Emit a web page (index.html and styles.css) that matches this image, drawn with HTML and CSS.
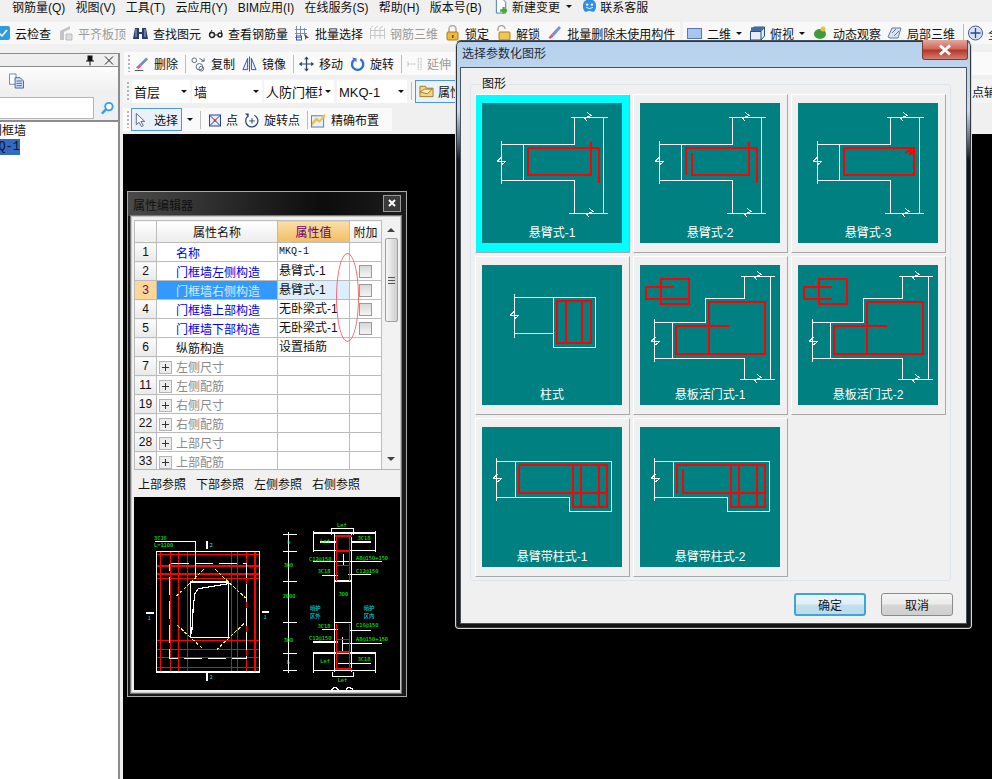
FILE: index.html
```html
<!DOCTYPE html>
<html>
<head>
  <meta charset="utf-8">
  <title>钢筋算量</title>
  <link rel="stylesheet" href="styles.css">
</head>
<body>
  <svg class="defs" width="0" height="0">
    <defs>
      <path id="brk-v" d="M-4.5 .5H4.5M.5 -4L-4 .5M4.5 .5L.5 4"/>
      <path id="brk-h" d="M.5 -4.5L4 -1.5L-2.5 1L.5 4.5"/>
      <g id="wall-a" class="wire">
        <path d="M19.5 38V81M19.5 41.5H92.5V14.5M88.5 14.5H125.5M121.5 14.5V110.5M86.5 110.5H125.5M92.5 110.5V77.5H19.5M41.5 41.5V77.5"/>
        <use href="#brk-v" x="19" y="58"/>
        <use href="#brk-h" x="105" y="14"/>
        <use href="#brk-h" x="107" y="110"/>
      </g>
      <g id="wall-b" class="wire">
        <path d="M14.5 54V97M14.5 57.5H65.5V33.5H104.5V11.5M101 11.5H135M130.5 11.5V114.5M100 114.5H135M104.5 114.5V93.5H14.5M32.5 57.5V93.5"/>
        <use href="#brk-v" x="15" y="76"/>
        <use href="#brk-h" x="117" y="11"/>
        <use href="#brk-h" x="117" y="114"/>
      </g>
      <g id="wall-c" class="wire">
        <path d="M14.5 31V74M14.5 34.5H129.5V84.5H87.5V70.5H14.5M33.5 34.5V70.5"/>
        <use href="#brk-v" x="15" y="51"/>
      </g>
    </defs>
  </svg>

  <div class="app">
    <div class="menubar">
      <span>钢筋量(Q)</span><span>视图(V)</span><span>工具(T)</span><span>云应用(Y)</span><span>BIM应用(I)</span><span>在线服务(S)</span><span>帮助(H)</span><span>版本号(B)</span>
      <span class="tool tool-new">
        <svg class="ico" viewBox="0 0 16 16"><path d="M2.5 .5H9L12.5 4V15.5H2.5Z" fill="#fff" stroke="#3f74b5"/><path d="M9 9H11.5V11.5H14V14H11.5V16H9V14H6.500V11.500H9Z" fill="#4fa32e"/></svg>
        新建变更<i class="caret"></i>
      </span>
      <span class="tool">
        <svg class="ico" viewBox="0 0 16 16"><path d="M8 1C13 1 15 4 15 8C15 12 13 15 11.500 14L8 13L4.500 14C3 15 1 12 1 8C1 4 3 1 8 1Z" fill="#2f8fe0"/><circle cx="5.500" cy="6.500" r="1.300" fill="#fff"/><circle cx="10.500" cy="6.500" r="1.300" fill="#fff"/><path d="M4.500 9.500Q8 12 11.500 9.500" fill="none" stroke="#fff"/></svg>
        联系客服
      </span>
    </div>

    <div class="top-tools">
      <div class="band band-main">
        <span class="tool">
          <svg class="ico" viewBox="0 0 15 16"><rect x="0" y="1" width="15" height="14" rx="2" fill="#2f9be0"/><path d="M4 8L7 11L12 5" fill="none" stroke="#fff" stroke-width="1.500"/></svg>
          云检查
        </span>
        <span class="tool off">
          <svg class="ico" viewBox="0 0 15 16"><path d="M2 15V6L12 1V4L6 7V15Z" fill="#c4c4c4"/><path d="M8 9H14V15H8Z" fill="#dcdcdc" stroke="#bbb"/></svg>
          平齐板顶
        </span>
        <span class="tool">
          <svg class="ico" viewBox="0 0 15 16"><path d="M2 3H6V7H9V3H13L15 14H9V9H6V14H0Z" fill="#2c3a66"/><path d="M3 4V12M12 4V12" stroke="#9fb4d8"/></svg>
          查找图元
        </span>
        <span class="tool">
          <svg class="ico" viewBox="0 0 15 16"><circle cx="4" cy="10" r="2.500" fill="none" stroke="#222" stroke-width="1.400"/><circle cx="12" cy="10" r="2" fill="none" stroke="#222" stroke-width="1.400"/><path d="M6.500 10H10M1.500 9L4 5M14 9L13 5" stroke="#222" fill="none"/></svg>
          查看钢筋量
        </span>
        <span class="tool">
          <svg class="ico" viewBox="0 0 15 16"><path d="M1.500 1V15M5.500 1V11M9.500 3V11M0 4.500H12M0 8.500H12M0 12.500H7" stroke="#7f8ea6" fill="none"/><rect x="1.500" y="11" width="5" height="4" fill="none" stroke="#2f55b0"/><path d="M10 9L14 13H11.500L10 15Z" fill="#555"/></svg>
          批量选择
        </span>
        <span class="tool off">
          <svg class="ico" viewBox="0 0 15 16"><path d="M.5 3V14M5 3V14M10 3V14M14.500 3V14M0 5.500H15M0 10.500H15M3 1L.5 3M8 1L5 3M13 1L10 3" stroke="#c8c8c8" fill="none"/></svg>
          钢筋三维
        </span>
        <span class="tool">
          <svg class="ico" viewBox="0 0 15 16"><path d="M4 7V4A3.500 3.500 0 0 1 11 4V7" fill="none" stroke="#a9a9a9" stroke-width="1.500"/><rect x="2" y="7" width="11" height="8" rx="1" fill="#efb93a" stroke="#b07d12"/><rect x="7" y="10" width="1.500" height="3" fill="#6b4a06"/></svg>
          锁定
        </span>
        <span class="tool">
          <svg class="ico" viewBox="0 0 15 16"><path d="M2 6V4A3.500 3.500 0 0 1 9 4" fill="none" stroke="#a9a9a9" stroke-width="1.500"/><rect x="3" y="7" width="11" height="8" rx="1" fill="#f0c653" stroke="#b07d12"/></svg>
          解锁
        </span>
        <span class="tool">
          <svg class="ico" viewBox="0 0 15 16"><path d="M12 1L14 3L7 11L4.500 9Z" fill="#7b93c9"/><path d="M4.500 9L7 11L3 14L1.500 12.500Z" fill="#d9559a"/></svg>
          批量删除未使用构件
        </span>
      </div>
      <div class="band band-view">
        <span class="tool">
          <svg class="ico" viewBox="0 0 15 16"><rect x=".5" y="3.500" width="14" height="10" fill="#a9c6ee" stroke="#5378b5"/></svg>
          二维<i class="caret"></i>
        </span>
        <span class="tool">
          <svg class="ico" viewBox="0 0 15 16"><path d="M.5 6.500L4 2H14.500V11L11 15H.5Z" fill="#e6eef9" stroke="#2b4f86"/><path d="M.5 6.500H11V15M11 6.500L14.500 2" fill="none" stroke="#2b4f86"/><path d="M1 2.500L4 2H14L11 6H1Z" fill="#3f6ea8"/></svg>
          俯视<i class="caret"></i>
        </span>
        <span class="tool tool-orbit">
          <svg class="ico" viewBox="0 0 15 16"><ellipse cx="7" cy="9" rx="6" ry="5" fill="#3f9a3a"/><circle cx="10" cy="4" r="2.500" fill="#e2c63a"/></svg>
          动态观察
        </span>
        <span class="tool">
          <svg class="ico" viewBox="0 0 15 16"><path d="M1 12L5 3H14L11 13H3Z" fill="#dbe4f2" stroke="#5f7aa6"/><path d="M5 8L9 4M7 11L12 6" stroke="#5f7aa6"/></svg>
          局部三维
        </span>
        <i class="sep sep-end"></i>
        <span class="tool">
          <svg class="ico" viewBox="0 0 15 16"><circle cx="7.500" cy="8" r="7" fill="#d7e3f5" stroke="#3e5c94"/><path d="M7.500 3V13M2.500 8H12.500" stroke="#24498d" stroke-width="1.300"/></svg>
          全
        </span>
      </div>
    </div>

    <div class="workspace">
      <aside class="side">
        <div class="side-head">
          <svg class="pin" viewBox="0 0 10 11"><path d="M2.500 .5H7.500V5.500H9V6.500H5.500V10.500H4.500V6.500H1V5.500H2.500Z" fill="#111"/></svg>
          <svg class="pin" viewBox="0 0 10 11"><path d="M1 1.500L9 9.500M9 1.500L1 9.500" stroke="#222"/></svg>
        </div>
        <div class="side-tools">
          <svg class="ico" viewBox="0 0 16 16"><path d="M.5 .5H7.500V11.500H.5Z" fill="#fff" stroke="#6c7fa6"/><path d="M6.500 4.500H12L15.500 8V15.500H6.500Z" fill="#d5e3fa" stroke="#3d5fa8"/><path d="M8 8H14M8 10.500H14M8 13H14" stroke="#3d5fa8"/></svg>
        </div>
        <div class="side-search">
          <div class="search-input"></div>
          <svg class="ico" viewBox="0 0 16 16"><rect width="16" height="16" fill="#e8f1fa"/><circle cx="9.500" cy="6.500" r="4" fill="#fff" stroke="#3d9be0" stroke-width="2"/><path d="M6.500 9.500L2 14" stroke="#3d9be0" stroke-width="2.500"/></svg>
        </div>
        <div class="tree">
          <div class="tree-row">门框墙</div>
          <div class="tree-row tree-hit"><span>MKQ-1</span></div>
        </div>
      </aside>

      <main class="stage">
        <div class="strip strip-edit">
          <span class="tool">
            <svg class="ico" viewBox="0 0 16 16"><path d="M13 1L15 3L8 10L6 8Z" fill="#6d8bc7"/><path d="M6 8L8 10L5 13L2 12Z" fill="#d9559a"/><path d="M1 15H10" stroke="#444"/></svg>
            删除
          </span>
          <i class="sep"></i>
          <span class="tool">
            <svg class="ico" viewBox="0 0 16 16"><circle cx="3.500" cy="4" r="2.500" fill="none" stroke="#5a6678"/><circle cx="9" cy="11" r="3.500" fill="none" stroke="#5a6678"/><circle cx="11" cy="13" r="2.500" fill="none" stroke="#5a6678"/><path d="M9 2L14 5M14 2V5H11" fill="none" stroke="#5a6678"/></svg>
            复制
          </span>
          <span class="tool">
            <svg class="ico" viewBox="0 0 16 16"><path d="M6 2V14H1ZM10 2V14H15Z" fill="#e6edf8" stroke="#2c549b"/><path d="M8 0V16" stroke="#2c549b"/></svg>
            镜像
          </span>
          <i class="sep"></i>
          <span class="tool">
            <svg class="ico" viewBox="0 0 16 16"><path d="M8 1V15M1 8H15" stroke="#27456f" stroke-width="1.300"/><path d="M8 0L10.500 3H5.500ZM8 16L5.500 13H10.500ZM0 8L3 5.500V10.500ZM16 8L13 10.500V5.500Z" fill="#27456f"/></svg>
            移动
          </span>
          <span class="tool">
            <svg class="ico" viewBox="0 0 16 16"><path d="M4.500 3.500A6 6 0 1 0 11 3" fill="none" stroke="#2f6fc4" stroke-width="2.500"/><path d="M2 1L7 2V6Z" fill="#2f6fc4"/></svg>
            旋转
          </span>
          <i class="sep"></i>
          <span class="tool off">
            <svg class="ico" viewBox="0 0 16 16"><path d="M1 8H9M1 5.500V10.500M12 1.500V14.500M15 1.500V14.500" stroke="#b5b5b5" stroke-dasharray="2 1" fill="none"/></svg>
            延伸
          </span>
        </div>

        <div class="strip strip-combo">
          <div class="combo combo-a">首层<i class="caret"></i></div>
          <div class="combo combo-b">墙<i class="caret"></i></div>
          <div class="combo combo-c"><span class="combo-text">人防门框墙</span><i class="caret"></i></div>
          <div class="combo combo-d">MKQ-1<i class="caret"></i></div>
          <i class="sep"></i>
          <span class="tool tool-on tool-attr">
            <svg class="ico" viewBox="0 0 16 16"><path d="M1 3H7L8 5H15V14H1Z" fill="#f4d77e" stroke="#9d7a2a"/><path d="M1 9L6 6H14L9 11Z" fill="#fff0b8" stroke="#9d7a2a"/></svg>
            属性
          </span>
          <span class="cut-right">点辅助</span>
        </div>

        <div class="strip strip-draw">
          <span class="tool tool-on tool-select">
            <svg class="ico" viewBox="0 0 16 16"><path d="M3.500 1V13L6.500 10.500L9 15L11 14L8.500 9.500H12.500Z" fill="#f8f8f8" stroke="#4f6488"/></svg>
            选择
          </span>
          <i class="caret"></i>
          <i class="sep"></i>
          <span class="tool tool-dot">
            <svg class="ico" viewBox="0 0 12 16"><rect x=".5" y="3" width="11" height="11" fill="#e6ecf8" stroke="#27428a"/><path d="M1 3.500L11 13.500M11 3.500L1 13.500" stroke="#27428a"/><circle cx="6" cy="8.500" r="1.300" fill="#d33"/></svg>
            点
          </span>
          <span class="tool">
            <svg class="ico" viewBox="0 0 16 16"><path d="M4 4A6.500 6.500 0 1 0 11 3" fill="none" stroke="#27456f" stroke-width="1.300"/><path d="M1 1H5V5Z" fill="#27456f"/><path d="M8.500 6V12M5.500 9H11.500" stroke="#27456f"/></svg>
            旋转点
          </span>
          <i class="sep sep-tight"></i>
          <span class="tool">
            <svg class="ico" viewBox="0 0 16 16"><rect x=".5" y="3.500" width="13" height="12" fill="#eaf0fa" stroke="#5578b3"/><path d="M1 10L6 5L9 8L15 1V5L9 11L6 9L1 14Z" fill="#e8c254"/></svg>
            精确布置
          </span>
        </div>

        <div class="canvas"></div>
      </main>
    </div>
  </div>

  <section class="prop-window">
    <header class="prop-title">
      <span>属性编辑器</span>
      <button class="prop-close"><svg viewBox="0 0 8 8" width="8" height="8"><path d="M1 1L7 7M7 1L1 7" stroke="#fff" stroke-width="2"/></svg></button>
    </header>
    <div class="prop-body">
      <div class="prop-grid">
        <table class="prop-table">
          <colgroup><col class="c-no"><col class="c-name"><col class="c-val"><col class="c-add"></colgroup>
          <thead>
            <tr><th></th><th>属性名称</th><th class="th-val">属性值</th><th>附加</th></tr>
          </thead>
          <tbody>
            <tr><th>1</th><td class="link">名称</td><td class="mono">MKQ-1</td><td></td></tr>
            <tr><th>2</th><td class="link">门框墙左侧构造</td><td>悬臂式-1</td><td><i class="check"></i></td></tr>
            <tr class="current"><th>3</th><td class="link">门框墙右侧构造</td><td>悬臂式-1</td><td><i class="check"></i></td></tr>
            <tr><th>4</th><td class="link">门框墙上部构造</td><td>无卧梁式-1</td><td><i class="check"></i></td></tr>
            <tr><th>5</th><td class="link">门框墙下部构造</td><td>无卧梁式-1</td><td><i class="check"></i></td></tr>
            <tr><th>6</th><td class="plain">纵筋构造</td><td>设置插筋</td><td></td></tr>
            <tr><th>7</th><td class="group"><i class="plus"></i>左侧尺寸</td><td></td><td></td></tr>
            <tr><th>11</th><td class="group"><i class="plus"></i>左侧配筋</td><td></td><td></td></tr>
            <tr><th>19</th><td class="group"><i class="plus"></i>右侧尺寸</td><td></td><td></td></tr>
            <tr><th>22</th><td class="group"><i class="plus"></i>右侧配筋</td><td></td><td></td></tr>
            <tr><th>28</th><td class="group"><i class="plus"></i>上部尺寸</td><td></td><td></td></tr>
            <tr><th>33</th><td class="group"><i class="plus"></i>上部配筋</td><td></td><td></td></tr>
          </tbody>
        </table>
        <div class="vscroll">
          <i class="arrow-up"></i>
          <div class="thumb"><i></i></div>
          <i class="arrow-down"></i>
        </div>
      </div>
      <div class="ref-tabs"><span>上部参照</span><span>下部参照</span><span>左侧参照</span><span>右侧参照</span></div>
      <svg class="ref-drawing" viewBox="27 20 798 579" width="266" height="193">
        <g class="d-red">
          <path d="M94 193H404M94 227H404M94 251H404M94 265H404M94 451H404M94 478H404M94 502H404M94 532H404"/>
          <path d="M106 184V545M136 184V545M160 184V545M187 184V545M320 184V545M338 184V545M365 184V545M390 184V545"/>
        </g>
        <g class="d-white">
          <rect x="94" y="184" width="310" height="361"/>
          <path class="dash" d="M137 220H365V505H134V220"/>
          <path d="M196 275H310V442H196ZM310 280L220 295L210 310L205 345L200 432"/>
          <path d="M90 154H212V265"/>
          <path class="thick" d="M246 153V177M246 549V573M63 368H87M411 365H432"/>
        </g>
        <path class="d-yellow" d="M236 237L154 318M270 237L362 323M157 405L232 474M357 400L276 477"/>
        <g class="d-white">
          <path d="M490 125V548M473 133H515M473 184H515M473 273H515M473 397H515M473 490H515M473 541H515"/>
          <path d="M620 135V115H686V135M565 122V186M752 122V186M565 128H752M565 181H752M629 128V545M680 128V545M629 272H680M629 397H680"/>
          <path d="M585 155H632M680 155H738M565 214H655M655 214H770M590 255H640M670 253H738M590 418H640M672 421H738M565 455H640M655 460H770M640 520H738"/>
          <path d="M565 486V547M752 486V547M565 488H752M565 541H752M622 545V558H686V545M655 190V225M652 440V490"/>
          <path d="M620 602A10 10 0 0 1 640 602M663 602A10 10 0 0 1 683 602"/>
        </g>
        <g class="d-red">
          <path d="M634 138V272M674 138V272M634 225H674M634 182H674M634 402V537M674 402V537M634 447H674M634 485H674"/>
          <path class="thick" d="M630 138H680M630 536H680"/>
        </g>
        <g class="d-green">
          <text x="87" y="150">3C16</text><text x="87" y="171">L=1100</text>
          <text x="487" y="162">b</text><text x="476" y="231">300</text><text x="473" y="323">2000</text><text x="476" y="456">300</text><text x="485" y="522">b</text>
          <text x="636" y="110">Lef</text><text x="586" y="158">Lef</text><text x="698" y="149">3C18</text>
          <text x="552" y="213">C12@150</text><text x="693" y="209">A8@150+150</text>
          <text x="578" y="248">3C18</text><text x="693" y="248">C12@150</text><text x="641" y="317">300</text>
          <text x="578" y="413">3C18</text><text x="693" y="410">C16@150</text>
          <text x="552" y="449">C12@150</text><text x="693" y="452">A8@150+150</text>
          <text x="586" y="518">Lef</text><text x="698" y="513">3C18</text><text x="638" y="575">Lef</text>
        </g>
        <g class="d-cyan">
          <text x="555" y="358">暗护</text><text x="555" y="383">区外</text>
          <text x="716" y="358">暗护</text><text x="716" y="383">区内</text>
          <text x="68" y="389">1</text><text x="416" y="386">1</text><text x="254" y="170">2</text><text x="254" y="566">2</text>
        </g>
      </svg>
    </div>
    <i class="red-ring"></i>
  </section>

  <section class="dialog">
    <header class="dialog-title">
      <span>选择参数化图形</span>
      <button class="dialog-close"><svg viewBox="0 0 14 12" width="14" height="12"><path d="M2 1.500L12 10.500M12 1.500L2 10.500" stroke="#fff" stroke-width="3"/></svg></button>
    </header>
    <div class="dialog-body">
      <fieldset class="shapes">
        <legend>图形</legend>
        <div class="shape-grid">
          <figure class="shape shape-picked">
            <div class="thumb-box">
              <svg viewBox="0 0 140 122"><use href="#wall-a"/><path class="rebar" d="M46 45H116.500V80M109 39V72H46V45"/></svg>
              <figcaption>悬臂式-1</figcaption>
            </div>
          </figure>
          <figure class="shape">
            <div class="thumb-box">
              <svg viewBox="0 0 140 122"><use href="#wall-a"/><path class="rebar" d="M46 72V45H116.500V80M109 39V72H52V50"/></svg>
              <figcaption>悬臂式-2</figcaption>
            </div>
          </figure>
          <figure class="shape">
            <div class="thumb-box">
              <svg viewBox="0 0 140 122"><use href="#wall-a"/><path class="rebar" d="M46 45H116V72H46ZM107 50L114 46M111 52L115 48"/></svg>
              <figcaption>悬臂式-3</figcaption>
            </div>
          </figure>
          <figure class="shape">
            <div class="thumb-box">
              <svg viewBox="0 0 140 122">
                <g class="wire"><path d="M32.500 29V73M32.500 32.500H71.500M32.500 68.500H71.500M71.500 32.500H113.500V82.500H71.500Z"/><use href="#brk-v" x="32" y="50"/></g>
                <path class="rebar" d="M75 36H109V78H75ZM84 36V78M100 36V78"/>
              </svg>
              <figcaption>柱式</figcaption>
            </div>
          </figure>
          <figure class="shape">
            <div class="thumb-box">
              <svg viewBox="0 0 140 122"><use href="#wall-b"/>
                <path class="rebar" d="M21 14H49V39H21ZM33 22H6V34H48M69 89V37H125V89H36V61H89"/>
              </svg>
              <figcaption>悬板活门式-1</figcaption>
            </div>
          </figure>
          <figure class="shape">
            <div class="thumb-box">
              <svg viewBox="0 0 140 122"><use href="#wall-b"/>
                <path class="rebar" d="M21 14H49V39H21ZM34 22H6V34H34M69 89V37H125V89H36V61H89"/>
              </svg>
              <figcaption>悬板活门式-2</figcaption>
            </div>
          </figure>
          <figure class="shape">
            <div class="thumb-box">
              <svg viewBox="0 0 140 122"><use href="#wall-c"/>
                <path class="rebar" d="M37 38H125V80H91V38M37 38V66H125M99 38V80M117 38V80"/>
              </svg>
              <figcaption>悬臂带柱式-1</figcaption>
            </div>
          </figure>
          <figure class="shape">
            <div class="thumb-box">
              <svg viewBox="0 0 140 122"><use href="#wall-c"/>
                <path class="rebar" d="M37 66V38H125V80H91V38M43 42V66H125M99 38V80M117 38V80"/>
              </svg>
              <figcaption>悬臂带柱式-2</figcaption>
            </div>
          </figure>
        </div>
      </fieldset>
      <div class="dialog-foot">
        <button class="btn btn-default">确定</button>
        <button class="btn">取消</button>
      </div>
    </div>
  </section>
</body>
</html>
```

FILE: styles.css
```css
body {
  margin: 0;
  width: 992px;
  height: 779px;
  overflow: hidden;
  position: relative;
  background-color: #f0f0f0;
  color: #111;
  font-family: "Liberation Sans", "Noto Sans CJK SC", sans-serif;
  font-size: 12px;
}

.defs {
  position: absolute;
}

.app {
  height: 779px;
  display: flex;
  flex-direction: column;
}

.ico {
  width: 15px;
  height: 16px;
  flex: none;
}

.tool {
  display: inline-flex;
  align-items: center;
  gap: 5px;
  white-space: nowrap;
  flex: none;
}

.off {
  color: #9a9a9a;
}

.caret {
  display: inline-block;
  width: 0;
  height: 0;
  border-left: 3px solid transparent;
  border-right: 3px solid transparent;
  border-top: 3px solid #111;
  flex: none;
}

.sep {
  width: 1px;
  height: 18px;
  background-color: #bdbdbd;
  flex: none;
}

/* menu */
.menubar {
  height: 12px;
  padding-left: 12px;
  display: flex;
  align-items: center;
  gap: 10.25px;
  white-space: nowrap;
  margin-bottom: 10px;
}

.menubar .tool {
  gap: 3px;
}

.menubar .caret {
  margin-left: 3px;
}

.tool-new {
  margin-left: 2px;
}

/* top toolbar */
.top-tools {
  height: 22px;
  display: flex;
  gap: 3px;
  margin-bottom: 6px;
  white-space: nowrap;
}

.band {
  display: flex;
  align-items: center;
  gap: 7px;
  background-color: #f8f8f8;
  flex: none;
}

.band-main {
  width: 685px;
  margin-left: -5px;
}

.band-view {
  padding-left: 4px;
  flex: 1;
  gap: 8px;
  overflow: hidden;
}

.tool-orbit {
  margin-right: -2px;
}

.sep-end {
  margin-right: -4px;
}

/* left panel */
.workspace {
  flex: 1;
  display: flex;
  min-height: 0;
}

.side {
  width: 118px;
  margin-top: 3px;
  border-right: 2px solid #8c8c8c;
  display: flex;
  flex-direction: column;
  flex: none;
}

.side-head {
  height: 12px;
  border-top: 1px solid #8c8c8c;
  border-bottom: 1px solid #8c8c8c;
  background-color: #eeeeee;
  display: flex;
  justify-content: flex-end;
  align-items: center;
  gap: 9px;
  padding-right: 4px;
}

.pin {
  width: 10px;
  height: 11px;
}

.side-tools {
  height: 28px;
  padding-left: 9px;
  display: flex;
  align-items: center;
  background: linear-gradient(#fdfdfd, #eeeeee);
}

.side-search {
  height: 25px;
  display: flex;
  align-items: center;
  gap: 6px;
}

.search-input {
  width: 94px;
  height: 22px;
  background-color: #fff;
  border: 1px solid #b4b4b4;
  border-left: 0;
  box-sizing: border-box;
}

.tree {
  flex: 1;
  background-color: #fff;
  border-top: 2px solid #8c8c8c;
  overflow: hidden;
  padding-top: 1px;
}

.tree-row {
  height: 16px;
  line-height: 16px;
  margin-left: -10px;
  white-space: nowrap;
}

.tree-hit {
  margin-left: 0;
  width: 20px;
  overflow: hidden;
  background-color: #316ac5;
  font-family: "Liberation Mono", monospace;
  direction: rtl;
}

/* drawing area toolbars */
.stage {
  flex: 1;
  display: flex;
  flex-direction: column;
  min-width: 0;
  margin-left: 3px;
}

.strip {
  display: flex;
  align-items: center;
  background-color: #fafafa;
  padding-left: 8px;
  position: relative;
  white-space: nowrap;
}

.strip::before {
  content: "";
  position: absolute;
  left: 4px;
  top: 3px;
  bottom: 3px;
  width: 2px;
  background: repeating-linear-gradient(#b5b5b5 0 2px, transparent 2px 4px);
}

.strip-edit {
  height: 23px;
  margin: 2px 0 4px 1px;
  padding-left: 10px;
  gap: 7px;
}

.strip-edit .sep {
  margin-right: -2px;
}

.strip-combo {
  height: 24px;
  margin-bottom: 5px;
  background-color: #f4f4f4;
  gap: 2px;
}

.combo {
  height: 23px;
  line-height: 25px;
  background-color: #fff;
  padding-left: 2px;
  box-sizing: border-box;
  position: relative;
  font-size: 13px;
  flex: none;
}

.combo .caret {
  position: absolute;
  right: 3px;
  top: 10px;
}

.combo-a {
  width: 58px;
  margin-left: 1px;
}

.combo-b {
  width: 70px;
}

.combo-c {
  width: 70px;
}

.combo-text {
  display: block;
  width: 56px;
  overflow: hidden;
}

.combo-d {
  width: 70px;
  margin-left: 1px;
}

.strip-combo .sep {
  margin: 0 1px 0 2px;
}

.tool-on {
  background-color: #e9f1fa;
  border: 1px solid #4a97e0;
  box-sizing: border-box;
  height: 23px;
}

.tool-attr {
  padding: 0 3px;
  gap: 4px;
}

.cut-right {
  margin-left: auto;
  width: 20px;
  overflow: hidden;
}

.strip-draw {
  height: 23px;
  width: 261px;
  gap: 5px;
  margin-bottom: 3px;
}

.tool-select {
  width: 51px;
  padding-left: 1px;
  gap: 6px;
}

.strip-draw .sep {
  margin: 0 2px;
}

.strip-draw .sep-tight {
  margin: 0 -2px 0 2px;
}

.tool-dot {
  margin: 0 1px 0 1px;
}

.tool-dot .ico {
  width: 12px;
}

.canvas {
  flex: 1;
  background-color: #000;
}

/* property editor window */
.prop-window {
  position: absolute;
  left: 127px;
  top: 191px;
  width: 280px;
  height: 506px;
  box-sizing: border-box;
  border: 1px solid #a8a8a8;
  background-color: #1a1a1a;
  padding: 0 3px;
}

.prop-title {
  height: 24px;
  margin: 0 -3px;
  padding: 0 5px;
  display: flex;
  align-items: center;
  justify-content: space-between;
  background: linear-gradient(90deg, #4a4a4a, #2a2a2a 35%, #0c0c0c 70%, #1c1c1c);
  color: #101010;
}

.prop-close {
  width: 18px;
  height: 17px;
  padding: 0;
  margin-top: -2px;
  background-color: #3a3a3a;
  border: 1px solid #9a9a9a;
  display: flex;
  align-items: center;
  justify-content: center;
}

.prop-body {
  height: 477px;
  width: 270px;
  box-sizing: border-box;
  border: 1px solid #c6c6c6;
  outline: 1px solid #777;
  padding: 3px 0 0 2px;
  background-color: #f0f0f0;
  display: flex;
  flex-direction: column;
}

.prop-grid {
  height: 249px;
  border-bottom: 1px solid #b5b5b5;
  display: flex;
  background-color: #fff;
  overflow: hidden;
  flex: none;
}

.prop-table {
  table-layout: fixed;
  width: 247px;
  border-collapse: collapse;
  flex: none;
  align-self: flex-start;
}

.c-no {
  width: 22px;
}

.c-name {
  width: 121px;
}

.c-val {
  width: 72px;
}

.c-add {
  width: 32px;
}

.prop-table th,
.prop-table td {
  height: 18px;
  padding: 0;
  border: 1px solid #bcbcbc;
  font-weight: normal;
  white-space: nowrap;
  overflow: hidden;
}

.prop-table thead th {
  height: 21px;
  background: linear-gradient(#ffffff, #ececec);
}

.prop-table .th-val {
  background: linear-gradient(#fbdfa8, #f2bd66);
  color: #6a006a;
}

.prop-table tbody th {
  background: linear-gradient(#fbfbfb, #e9e9e9);
}

.prop-table td:nth-child(3) {
  padding-left: 1px;
  line-height: 14px;
}

.prop-table td:nth-child(4) {
  text-align: center;
}

.link {
  color: #0000e6;
  padding-left: 19px !important;
}

.plain {
  padding-left: 19px !important;
}

.group {
  color: #8a8a8a;
  padding-left: 2px !important;
}

.mono {
  font-family: "Liberation Mono", monospace;
  font-size: 10px;
}

.plus {
  display: inline-block;
  width: 11px;
  height: 11px;
  margin-right: 4px;
  vertical-align: -2px;
  border: 1px solid #b4b4b4;
  background:
    linear-gradient(#333, #333) center / 7px 1px no-repeat,
    linear-gradient(#333, #333) center / 1px 7px no-repeat,
    #ececec;
}

.check {
  display: block;
  width: 11px;
  height: 11px;
  margin: 0 auto;
  border: 1px solid #9a9a9a;
  background: linear-gradient(#d8d8d8, #f4f4f4);
}

.current th {
  background: #fcd797 !important;
  color: #7a007a;
}

.current .link {
  background-color: #3399ff;
  color: #d8ecff;
}

.current td:nth-child(3) {
  background-color: #ddeeff;
}

.vscroll {
  width: 18px;
  background-color: #f2f2f2;
  display: flex;
  flex-direction: column;
  align-items: center;
  position: relative;
}

.arrow-up,
.arrow-down {
  position: absolute;
  width: 0;
  height: 0;
  border-left: 4px solid transparent;
  border-right: 4px solid transparent;
}

.arrow-up {
  top: 8px;
  border-bottom: 4px solid #444;
}

.arrow-down {
  bottom: 8px;
  border-top: 4px solid #444;
}

.thumb {
  width: 13px;
  height: 84px;
  margin-top: 18px;
  background: linear-gradient(90deg, #f6f6f6, #cfcfcf);
  border: 1px solid #9f9f9f;
  border-radius: 2px;
  box-sizing: border-box;
  display: flex;
  align-items: center;
  justify-content: center;
}

.thumb i {
  width: 7px;
  height: 7px;
  background: repeating-linear-gradient(#555 0 1px, transparent 1px 3px);
}

.ref-tabs {
  height: 27px;
  display: flex;
  align-items: center;
  padding-left: 4px;
  gap: 10px;
  flex: none;
}

.ref-drawing {
  display: block;
  background-color: #000;
  flex: none;
}

.d-red {
  fill: none;
  stroke: #ff0000;
  stroke-width: 4;
  shape-rendering: crispEdges;
}

.d-white {
  fill: none;
  stroke: #fff;
  stroke-width: 3.6;
  shape-rendering: crispEdges;
}

.thick {
  stroke-width: 6;
}

.dash {
  stroke-dasharray: 54 18;
}

.d-yellow {
  fill: none;
  stroke: #ffff00;
  stroke-width: 3;
  stroke-dasharray: 10 5;
  shape-rendering: crispEdges;
}

.d-green text {
  fill: #00ff00;
  font-family: "DejaVu Sans Mono", monospace;
  font-size: 16px;
}

.d-cyan text {
  fill: #00e5ff;
  font-family: "Noto Sans CJK SC", sans-serif;
  font-size: 16px;
}

.red-ring {
  position: absolute;
  left: 208px;
  top: 61px;
  width: 21px;
  height: 87px;
  border: 1px solid #f56a6a;
  border-radius: 50%;
}

/* parametric shape dialog */
.dialog {
  position: absolute;
  left: 455px;
  top: 40px;
  width: 517px;
  height: 589px;
  box-sizing: border-box;
  border: 1px solid #d8d8d8;
  border-top-color: #44505c;
  border-radius: 6px 6px 4px 4px;
  padding: 0 4px 4px;
  background: linear-gradient(#b7d1ec 0, #c6daf0 70px, #70808f 94px, #121416 120px);
  box-shadow: inset 0 0 0 1px #30363c;
}

.dialog-title {
  height: 26px;
  box-sizing: border-box;
  position: relative;
  display: flex;
  align-items: center;
  padding: 0 0 4px 2px;
  color: #1c2a3a;
}

.dialog-close {
  position: absolute;
  right: -1px;
  top: -1px;
  width: 46px;
  height: 20px;
  padding: 0;
  border: 1px solid #7a3a36;
  border-top: 0;
  border-radius: 0 0 3px 3px;
  background: linear-gradient(#e5a79c, #cf6a5c 45%, #b7372a 55%, #d27f70);
  display: flex;
  align-items: center;
  justify-content: center;
}

.dialog-body {
  height: 557px;
  border: 1px solid #46525e;
  background-color: #f0f0f0;
  box-sizing: border-box;
  padding: 0 0 0 9px;
}

.shapes {
  margin: 8px 0 0;
  padding: 0 0 0 4px;
  width: 481px;
  height: 505px;
  box-sizing: border-box;
  border: 1px solid #dce5ee;
  border-radius: 3px;
}

.shapes legend {
  margin-left: 5px;
  padding: 0 2px;
  line-height: 16px;
  font-size: 12px;
}

.shape-grid {
  display: grid;
  grid-template-columns: repeat(3, 155px);
  grid-auto-rows: 159px;
  gap: 3px;
  margin-top: 2px;
}

.shape {
  margin: 0;
  box-sizing: border-box;
  border: 1px solid;
  border-color: #fff #a8a8a8 #a8a8a8 #fff;
  padding: 8px 7px 9px 6px;
}

.shape-picked {
  background-color: #00ffff;
}

.thumb-box {
  width: 140px;
  height: 140px;
  background-color: #008080;
}

.thumb-box svg {
  display: block;
  width: 140px;
  height: 122px;
}

.thumb-box figcaption {
  height: 18px;
  line-height: 17px;
  text-align: center;
  color: #fff;
}

.wire {
  fill: none;
  stroke: #fff;
  stroke-width: 1;
  shape-rendering: crispEdges;
}

.rebar {
  fill: none;
  stroke: #ff0000;
  stroke-width: 2;
  stroke-linejoin: round;
  shape-rendering: crispEdges;
}

.dialog-foot {
  display: flex;
  justify-content: flex-end;
  gap: 15px;
  margin-top: 12px;
  padding-right: 13px;
}

.btn {
  width: 72px;
  height: 23px;
  padding: 0;
  border: 1px solid #8b8b8b;
  border-radius: 3px;
  background: linear-gradient(#f4f4f4 0, #ebebeb 48%, #d6d6d6 52%, #cfcfcf);
  font: inherit;
  color: #111;
}

.btn-default {
  border: 2px solid #3fa3dc;
  background: linear-gradient(#eaf5fc 0, #dfeef9 48%, #c3dfee 52%, #bcdcec);
}
```
